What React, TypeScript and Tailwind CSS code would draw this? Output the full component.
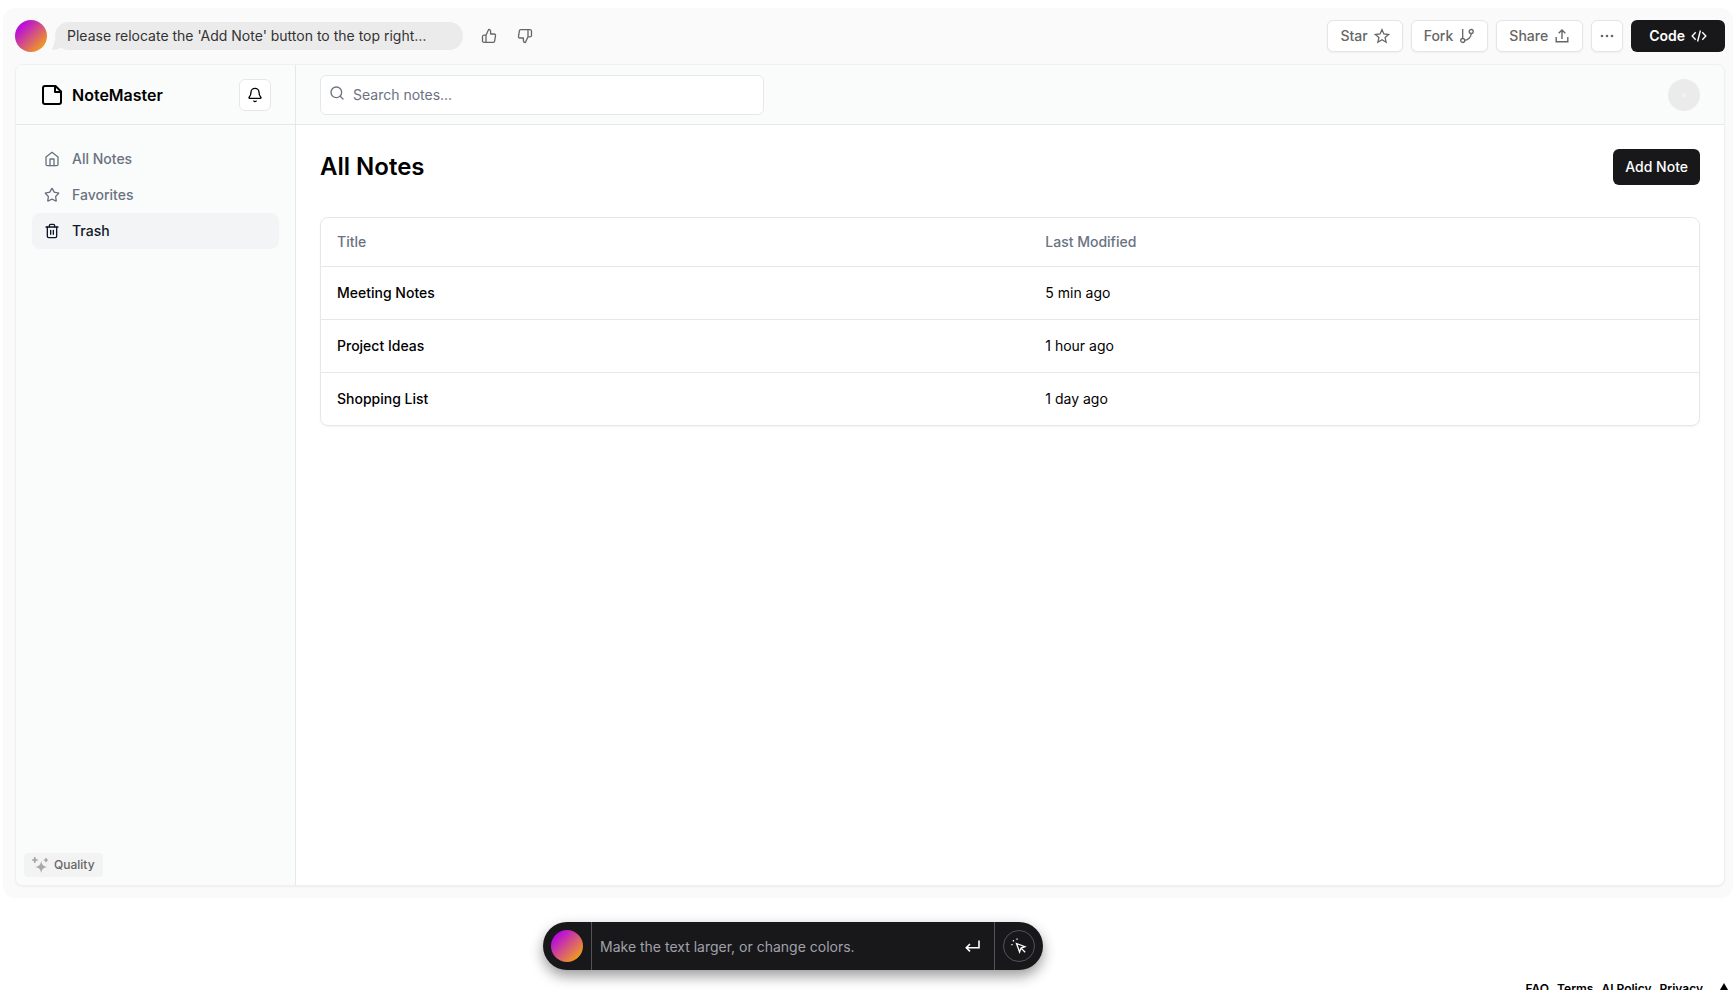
import React from "react";
import { Bell, Search, Star } from "lucide-react";

const stroke = {
  fill: "none",
  stroke: "currentColor",
  strokeWidth: 2,
  strokeLinecap: "round" as const,
  strokeLinejoin: "round" as const,
};

function NoteIcon() {
  return (
    <svg viewBox="0 0 24 24" className="size-6" {...stroke} aria-hidden="true">
      <path d="M15.5 3H5a2 2 0 0 0-2 2v14c0 1.1.9 2 2 2h14a2 2 0 0 0 2-2V8.500L15.500 3Z" />
      <path d="M15 3v6h6" />
    </svg>
  );
}

function HomeIcon() {
  return (
    <svg viewBox="0 0 24 24" className="size-4" {...stroke} aria-hidden="true">
      <path d="m3 9 9-7 9 7v11a2 2 0 0 1-2 2H5a2 2 0 0 1-2-2z" />
      <path d="M9 22V12h6v10" />
    </svg>
  );
}

function TrashIcon() {
  return (
    <svg viewBox="0 0 24 24" className="size-4" {...stroke} aria-hidden="true">
      <path d="M3 6h18" />
      <path d="M19 6v14c0 1-1 2-2 2H7c-1 0-2-1-2-2V6" />
      <path d="M8 6V4c0-1 1-2 2-2h4c1 0 2 1 2 2v2" />
      <path d="M10 11v6M14 11v6" />
    </svg>
  );
}

function ThumbIcon({ down = false }: { down?: boolean }) {
  return (
    <svg viewBox="0 0 16 16" className={down ? "size-4 rotate-180" : "size-4"} fill="none" stroke="currentColor" strokeWidth="1.3" strokeLinejoin="round" aria-hidden="true">
      <path d="M5 7.2 7.6 1.4c1.1 0 2 .9 2 2V6h3.6c.8 0 1.5.8 1.3 1.6l-.9 5.6c-.1.7-.6 1.1-1.3 1.1H3c-.9 0-1.5-.6-1.5-1.4V8.600c0-.8.6-1.4 1.500-1.400h2zM5 7.200v7.100" />
    </svg>
  );
}

function StarOutline() {
  return (
    <svg viewBox="0 0 16 16" className="size-4" fill="none" stroke="currentColor" strokeWidth="1.3" strokeLinejoin="miter" aria-hidden="true">
      <path d="m8 1.700 1.900 4.300 4.700.5-3.500 3.100 1 4.600L8 11.800l-4.100 2.400 1-4.600L1.400 6.500l4.700-.5z" />
    </svg>
  );
}

function ForkIcon() {
  return (
    <svg viewBox="0 0 16 16" className="size-4" fill="none" stroke="currentColor" strokeWidth="1.3" aria-hidden="true">
      <path d="M3.700 1v9.400M12.200 5.500c0 3.400-2.800 6.400-6.400 6.900" />
      <circle cx="3.700" cy="12.500" r="2" />
      <circle cx="12.200" cy="3.500" r="2" />
    </svg>
  );
}

function ShareIcon() {
  return (
    <svg viewBox="0 0 16 16" className="size-4" fill="none" stroke="currentColor" strokeWidth="1.4" aria-hidden="true">
      <path d="M2.200 9v4.800h11.600V9M8 11V2.200M4.700 5.300 8 2l3.300 3.300" />
    </svg>
  );
}

function DotsIcon() {
  return (
    <svg viewBox="0 0 16 16" className="size-4" fill="currentColor" aria-hidden="true">
      <circle cx="3" cy="8" r="1.300" />
      <circle cx="8" cy="8" r="1.300" />
      <circle cx="13" cy="8" r="1.300" />
    </svg>
  );
}

function CodeIcon() {
  return (
    <svg viewBox="0 0 16 16" className="size-4" fill="none" stroke="currentColor" strokeWidth="1.400" aria-hidden="true">
      <path d="M4.700 4.300 1.200 8l3.500 3.700M11.300 4.300 14.800 8l-3.500 3.700M9.400 2.500l-2.800 11" />
    </svg>
  );
}

function SparklesIcon() {
  return (
    <svg viewBox="0 0 16 16" className="size-4" fill="currentColor" aria-hidden="true">
      <path d="M9.200 4c.7 3.900 2.100 5.300 6 6-3.900.7-5.300 2.100-6 6-.7-3.900-2.100-5.300-6-6 3.900-.7 5.300-2.100 6-6z" />
      <path d="M2.200 0h1.200l.4 2 2 .4v1.200l-2 .4-.4 2H2.200l-.4-2-1.800-.4V2.400L1.800 2zM13.500 1h1l.4 1.300 1.100.4v.8l-1.100.4-.4 1.300h-1l-.4-1.300-1.300-.4v-.8l1.300-.4z" />
    </svg>
  );
}

function ReturnIcon() {
  return (
    <svg viewBox="0 0 16 16" className="size-4" fill="none" stroke="currentColor" strokeWidth="1.600" aria-hidden="true">
      <path d="M15 2.500v7.200H2.500M6 6 2.300 9.700 6 13.400" />
    </svg>
  );
}

function CursorIcon() {
  return (
    <svg viewBox="0 0 16 16" className="size-4" aria-hidden="true">
      <path d="m5.500 5.500 8.400 3.200-3.900 1.400-1.400 3.900zM10 10.100l4.200 4.200" fill="none" stroke="currentColor" strokeWidth="1.300" />
      <path d="M5.400.4h1.300v1.300H5.400zM1.800 2.100h1.300v1.300H1.800zM.3 6h1.300v1.300H.3z" fill="currentColor" />
    </svg>
  );
}

const toolButton =
  "flex h-8 items-center gap-1.5 rounded-md border border-[#e5e5e5] bg-white px-3 text-sm font-medium text-[#666] shadow-xs";

const navItem = "flex h-9 items-center gap-3 rounded-lg px-3 text-sm font-medium";

const orb =
  "size-8 shrink-0 rounded-full bg-[linear-gradient(135deg,#b400ee_12%,#f5a80f_92%)]";

const notes = [
  { title: "Meeting Notes", modified: "5 min ago" },
  { title: "Project Ideas", modified: "1 hour ago" },
  { title: "Shopping List", modified: "1 day ago" },
];

function TopBar() {
  return (
    <header className="flex h-8 items-center justify-between">
      <div className="flex items-center">
        <span className={orb} />
        <div className="relative ml-2 flex h-7 w-[408px] items-center rounded-full bg-[#ebebeb] px-3 text-sm text-[#333]">
          <svg viewBox="0 0 12 10" className="absolute bottom-0 -left-1 h-2.5 w-3" fill="#ebebeb" aria-hidden="true">
            <path d="M3.500 0c0 4-1 7.500-3.500 9.500 4 .5 7-.2 9-1.500L12 3z" />
          </svg>
          <p className="truncate">Please relocate the 'Add Note' button to the top right…</p>
        </div>
        <div className="ml-[18px] flex gap-5 text-[#666]">
          <button type="button" aria-label="Good response"><ThumbIcon /></button>
          <button type="button" aria-label="Bad response"><ThumbIcon down /></button>
        </div>
      </div>
      <div className="flex items-center gap-2">
        <button type="button" className={toolButton}>Star <StarOutline /></button>
        <button type="button" className={toolButton}>Fork <ForkIcon /></button>
        <button type="button" className={toolButton}>Share <ShareIcon /></button>
        <button type="button" aria-label="More" className="flex size-8 items-center justify-center rounded-md border border-[#e5e5e5] bg-white text-[#666] shadow-xs"><DotsIcon /></button>
        <button type="button" className="flex h-8 items-center gap-1.5 rounded-md bg-[#18181b] px-[18px] text-sm font-semibold text-white">Code <CodeIcon /></button>
      </div>
    </header>
  );
}

function Sidebar() {
  return (
    <aside className="flex w-[280px] shrink-0 flex-col border-r border-gray-200 bg-[#fafcfb]">
      <div className="flex h-[60px] items-center justify-between border-b border-gray-200 px-6">
        <a href="#home" className="flex items-center gap-2 font-semibold">
          <NoteIcon />
          NoteMaster
        </a>
        <button type="button" aria-label="Notifications" className="flex size-8 items-center justify-center rounded-md border border-gray-200 bg-white">
          <Bell className="size-4" />
        </button>
      </div>
      <nav className="flex-1 p-4">
        <a href="#all" className={navItem + " text-gray-500"}><HomeIcon />All Notes</a>
        <a href="#favorites" className={navItem + " text-gray-500"}><Star className="size-4" />Favorites</a>
        <a href="#trash" className={navItem + " bg-gray-100 text-gray-900"}><TrashIcon />Trash</a>
      </nav>
      <div className="p-2">
        <button type="button" className="flex h-6 items-center gap-1.5 rounded bg-[#f3f3f3] px-2 text-xs font-medium text-[#666]">
          <span className="text-[#a8a8a8]"><SparklesIcon /></span>
          Quality
        </button>
      </div>
    </aside>
  );
}

function NotesPage() {
  return (
    <div className="flex min-w-0 flex-1 flex-col">
      <div className="flex h-[60px] shrink-0 items-center gap-4 border-b border-gray-200 bg-[#fafcfb] px-6">
        <form className="flex-1">
          <label className="flex h-10 w-1/3 items-center gap-2 rounded-md border border-gray-200 bg-white px-2 text-gray-500">
            <Search className="mb-1 size-4 shrink-0" />
            <input type="search" aria-label="Search notes" placeholder="Search notes..." className="w-full bg-transparent text-sm outline-none placeholder:text-gray-500" />
          </label>
        </form>
        <button type="button" aria-label="Account" className="flex size-8 items-center justify-center rounded-full bg-[#ebebeb]">
          <span className="size-1 rounded-full bg-[#f3f3f3]" />
        </button>
      </div>
      <main className="flex flex-1 flex-col gap-8 p-6">
        <div className="flex items-center justify-between">
          <h1 className="text-2xl font-semibold">All Notes</h1>
          <button type="button" className="h-9 rounded-md bg-[#18181b] px-3 text-sm font-medium text-white">Add Note</button>
        </div>
        <div className="rounded-lg border border-gray-200 shadow-xs">
          <table className="w-full table-fixed text-left text-sm">
            <thead>
              <tr className="h-12 border-b border-gray-200 text-gray-500">
                <th className="w-[51.4%] px-4 font-medium">Title</th>
                <th className="px-4 font-medium">Last Modified</th>
              </tr>
            </thead>
            <tbody>
              {notes.map((note) => (
                <tr key={note.title} className="h-[53px] border-b border-gray-200 last:border-0">
                  <td className="px-4 font-medium">{note.title}</td>
                  <td className="px-4">{note.modified}</td>
                </tr>
              ))}
            </tbody>
          </table>
        </div>
      </main>
    </div>
  );
}

function PromptBar() {
  return (
    <form className="mt-6 ml-[543px] flex h-12 w-[500px] shrink-0 items-center rounded-full bg-[#18181b] text-white shadow-[0_6px_14px_rgba(0,0,0,0.4)]">
      <span className={orb + " mx-2"} />
      <input type="text" aria-label="Prompt" placeholder="Make the text larger, or change colors." className="h-full min-w-0 flex-1 border-l border-[#52525b] bg-transparent px-2 text-sm outline-none placeholder:text-[#a1a1aa]" />
      <button type="submit" aria-label="Send" className="flex h-full items-center border-r border-[#52525b] px-3.5"><ReturnIcon /></button>
      <button type="button" aria-label="Select element" className="mx-2 flex size-8 shrink-0 items-center justify-center rounded-full border border-[#52525b]"><CursorIcon /></button>
    </form>
  );
}

export default function App() {
  return (
    <div className="flex h-screen flex-col overflow-hidden bg-white pt-2 font-['Inter',sans-serif] text-black">
      <div className="ml-[3px] flex min-h-0 flex-1 flex-col gap-3 rounded-xl bg-[#fafafa] pt-3 pr-2 pb-3 pl-3">
        <TopBar />
        <div className="flex min-h-0 flex-1 overflow-hidden rounded-lg border border-[#f0f0f0] bg-white shadow-xs">
          <Sidebar />
          <NotesPage />
        </div>
      </div>
      <PromptBar />
      <footer className="flex h-5 shrink-0 items-start justify-end gap-2 pt-[11px] pr-0.5 text-xs font-semibold">
        <a href="#faq">FAQ</a>
        <a href="#terms">Terms</a>
        <a href="#ai-policy">AI Policy</a>
        <a href="#privacy">Privacy</a>
        <svg viewBox="0 0 14 12" className="mt-0.5 ml-1.5 h-3 w-3.5 shrink-0" aria-hidden="true"><path d="M7 0l7 12H0z" /></svg>
      </footer>
    </div>
  );
}
